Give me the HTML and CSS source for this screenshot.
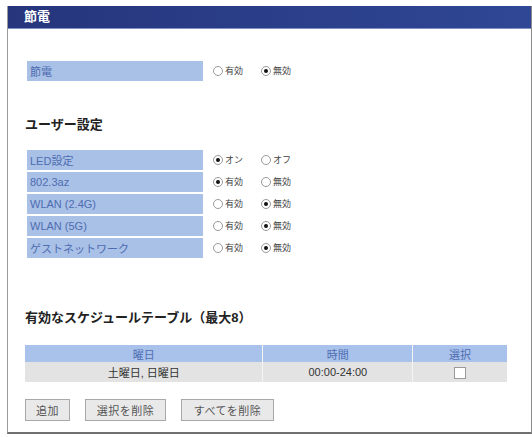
FILE: index.html
```html
<!DOCTYPE html>
<html lang="ja">
<head>
<meta charset="utf-8">
<title>節電</title>
<link rel="stylesheet" href="styles.css">
</head>
<body>
<div class="panel">
  <div class="title">節電</div>
  <div class="content">
    <table class="settings first">
      <tr>
        <td class="label">節電</td>
        <td class="opts"><span class="opt"><span class="radio"></span>有効</span><span class="opt"><span class="radio on"></span>無効</span></td>
      </tr>
    </table>

    <h2 class="heading user">ユーザー設定</h2>
    <table class="settings">
      <tr>
        <td class="label">LED設定</td>
        <td class="opts"><span class="opt"><span class="radio on"></span>オン</span><span class="opt"><span class="radio"></span>オフ</span></td>
      </tr>
      <tr>
        <td class="label">802.3az</td>
        <td class="opts"><span class="opt"><span class="radio on"></span>有効</span><span class="opt"><span class="radio"></span>無効</span></td>
      </tr>
      <tr>
        <td class="label">WLAN (2.4G)</td>
        <td class="opts"><span class="opt"><span class="radio"></span>有効</span><span class="opt"><span class="radio on"></span>無効</span></td>
      </tr>
      <tr>
        <td class="label">WLAN (5G)</td>
        <td class="opts"><span class="opt"><span class="radio"></span>有効</span><span class="opt"><span class="radio on"></span>無効</span></td>
      </tr>
      <tr>
        <td class="label">ゲストネットワーク</td>
        <td class="opts"><span class="opt"><span class="radio"></span>有効</span><span class="opt"><span class="radio on"></span>無効</span></td>
      </tr>
    </table>

    <h2 class="heading sched">有効なスケジュールテーブル（最大8）</h2>
    <table class="schedule">
      <tr class="head">
        <th class="c1">曜日</th>
        <th class="c2">時間</th>
        <th class="c3">選択</th>
      </tr>
      <tr class="row">
        <td class="c1">土曜日, 日曜日</td>
        <td class="c2">00:00-24:00</td>
        <td class="c3"><span class="check"></span></td>
      </tr>
    </table>

    <div class="buttons">
      <button class="btn b1">追加</button>
      <button class="btn b2">選択を削除</button>
      <button class="btn b3">すべてを削除</button>
    </div>
  </div>
</div>
</body>
</html>
```

FILE: styles.css
```css
html, body {
  margin: 0;
  padding: 0;
  background: #ffffff;
}

body {
  font-family: "Liberation Sans", "Noto Sans CJK JP", sans-serif;
  color: #333;
  width: 532px;
  height: 437px;
  overflow: hidden;
}

.panel {
  margin: 6px 0 0 7px;
  width: 523px;
  height: 426px;
  border-left: 1px solid #9a9a9a;
  border-right: 1px solid #8a8a8a;
  border-bottom: 2px solid #707070;
  display: flex;
  flex-direction: column;
}

.title {
  height: 22px;
  line-height: 22px;
  background: linear-gradient(to right, #26357c, #2f4795);
  border-bottom: 1px solid #8391c2;
  color: #fff;
  font-weight: bold;
  font-size: 13px;
  padding-left: 16px;
}

.content {
  padding: 30px 0 0 17px;
}

.settings {
  border-collapse: separate;
  border-spacing: 2px;
  margin-left: 0;
}

.settings td {
  padding: 0;
  height: 20px;
}

.settings .label {
  width: 176px;
  background: #a9c0e7;
  color: #4e6db0;
  font-size: 11px;
  padding-left: 3px;
  box-sizing: border-box;
}

.settings .opts {
  padding-left: 8px;
  font-size: 9px;
  color: #444;
}

.opt {
  display: inline-flex;
  align-items: center;
  width: 48px;
}

.radio {
  display: inline-block;
  width: 8px;
  height: 8px;
  border: 1px solid #9a9a9a;
  border-radius: 50%;
  margin-right: 2px;
  position: relative;
  background: #fff;
}

.radio.on::after {
  content: "";
  position: absolute;
  left: 2px;
  top: 2px;
  width: 4px;
  height: 4px;
  border-radius: 50%;
  background: #111;
}

.heading {
  margin: 0;
  font-size: 13px;
  font-weight: bold;
  color: #222;
  line-height: 16px;
}

.heading.user {
  margin-top: 34px;
  margin-bottom: 15px;
}

.heading.sched {
  margin-top: 50px;
  margin-bottom: 19px;
}

.schedule {
  border-collapse: collapse;
  width: 482px;
}

.schedule th,
.schedule td {
  padding: 0;
  text-align: center;
  font-size: 11px;
  border-right: 1px solid #f4f4f4;
}

.schedule th:last-child,
.schedule td:last-child {
  border-right: none;
}

.schedule .head th {
  height: 17px;
  background: #a9c2ec;
  color: #4e6db0;
  font-weight: normal;
}

.schedule .row td {
  height: 20px;
  background: #e3e3e3;
  color: #333;
}

.schedule .c1 { width: 238px; }
.schedule .c2 { width: 149px; }
.schedule .c3 { width: 94px; }

.check {
  display: inline-block;
  width: 10px;
  height: 10px;
  border: 1px solid #9a9a9a;
  background: #fff;
  vertical-align: middle;
}

.buttons {
  margin-top: 17px;
  display: flex;
  gap: 15px;
}

.btn {
  height: 22px;
  padding: 0 4px;
  font-family: "Liberation Sans", "Noto Sans CJK JP", sans-serif;
  font-size: 11px;
  color: #555;
  background: #e9e9e9;
  border: 1px solid #a8a8a8;
  border-radius: 0;
  letter-spacing: 0.5px;
}

.b1 { width: 45px; }
.b2 { width: 81px; }
.b3 { width: 93px; }
```
